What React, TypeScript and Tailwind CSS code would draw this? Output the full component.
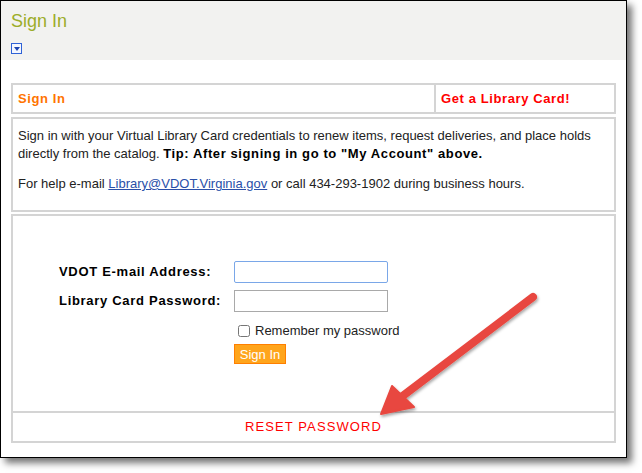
import { useState } from 'react';

export default function App() {
  const [remember, setRemember] = useState(false);

  return (
    <div className="relative h-[473px] w-[642px] bg-white font-['Liberation_Sans',Arial,sans-serif] text-[13px] text-[#222]">
      <div className="flex h-[458px] w-[627px] flex-col border border-black bg-white shadow-[5px_5px_7px_rgba(0,0,0,0.55)]">
        {/* Header */}
        <div className="h-[59px] bg-[#f2f2f0] px-[10px] pt-[9px]">
          <h1 className="text-[18px] leading-[22px] text-[#9cad29]">Sign In</h1>
          <button className="mt-[11px] flex h-[11px] w-[11px] items-center justify-center border border-[#2f62d6] bg-[#f4f7ff]">
            <span className="h-0 w-0 border-x-[3px] border-t-[4px] border-x-transparent border-t-[#1c44b0]" />
          </button>
        </div>

        <div className="flex flex-col gap-[3px] px-[10px] pt-[23px]">
          {/* Tabs row */}
          <div className="flex h-[31px] border-2 border-[#d4d4d4]">
            <div className="flex flex-1 items-center border-r-2 border-[#d4d4d4] pl-[5px] font-bold tracking-[0.6px] text-[#ff7400]">
              Sign In
            </div>
            <div className="flex w-[178px] items-center pl-[5px] font-bold tracking-[0.6px] text-[#ff0000]">
              Get a Library Card!
            </div>
          </div>

          {/* Info */}
          <div className="h-[95px] border-2 border-[#d4d4d4] px-[5px] pt-[8px] leading-[18px]">
            <p>
              Sign in with your Virtual Library Card credentials to renew items, request deliveries, and place holds
              directly from the catalog.{' '}
              <b className="tracking-[0.6px] text-black">Tip: After signing in go to "My Account" above.</b>
            </p>
            <p className="mt-[12px]">
              For help e-mail{' '}
              <a href="#" className="text-[#2a4fa8] underline">
                Library@VDOT.Virginia.gov
              </a>{' '}
              or call 434-293-1902 during business hours.
            </p>
          </div>

          {/* Form */}
          <div className="-mt-[1px] h-[199px] border-2 border-[#d4d4d4] pt-[45px]">
            <div className="grid grid-cols-[175px_200px] gap-y-[7px] pl-[46px]">
              <label className="flex h-[22px] items-center font-bold tracking-[0.7px] text-black">VDOT E-mail Address:</label>
              <input className="h-[22px] w-[154px] rounded-[2px] border border-[#7aa7e8] px-[2px] outline-none" />
              <label className="flex h-[22px] items-center font-bold tracking-[0.7px] text-black">Library Card Password:</label>
              <input type="password" className="h-[22px] w-[154px] border border-[#a9a9a9] px-[2px] outline-none" />
              <div />
              <label className="mt-[2px] flex items-center gap-[5px] whitespace-nowrap pl-[4px]">
                <input
                  type="checkbox"
                  checked={remember}
                  onChange={() => setRemember(!remember)}
                  className="h-[12px] w-[12px] accent-gray-400"
                />
                <span>Remember my password</span>
              </label>
              <div />
              <button className="-mt-[4px] h-[20px] w-[52px] border border-[#ff7f00] bg-[#ffa51c] text-[13px] text-white">
                Sign In
              </button>
            </div>
          </div>

          {/* Reset */}
          <div className="-mt-[3px] flex h-[30px] items-center justify-center border-2 border-t-0 border-[#d4d4d4] tracking-[1.1px] text-[#ff0000]">
            RESET PASSWORD
          </div>
        </div>
      </div>

      {/* Annotation arrow */}
      <svg className="pointer-events-none absolute left-0 top-0" width="642" height="473" viewBox="0 0 642 473">
        <defs>
          <filter id="arrowShadow" x="-20%" y="-20%" width="140%" height="140%">
            <feDropShadow dx="1" dy="2" stdDeviation="1.5" floodColor="#000" floodOpacity="0.35" />
          </filter>
        </defs>
        <g filter="url(#arrowShadow)" fill="#e8473f" stroke="#e8473f">
          <line x1="533" y1="297" x2="400" y2="398" strokeWidth="8" strokeLinecap="round" />
          <polygon points="381,414 392,386 414,407" strokeWidth="2" strokeLinejoin="round" />
        </g>
      </svg>
    </div>
  );
}
